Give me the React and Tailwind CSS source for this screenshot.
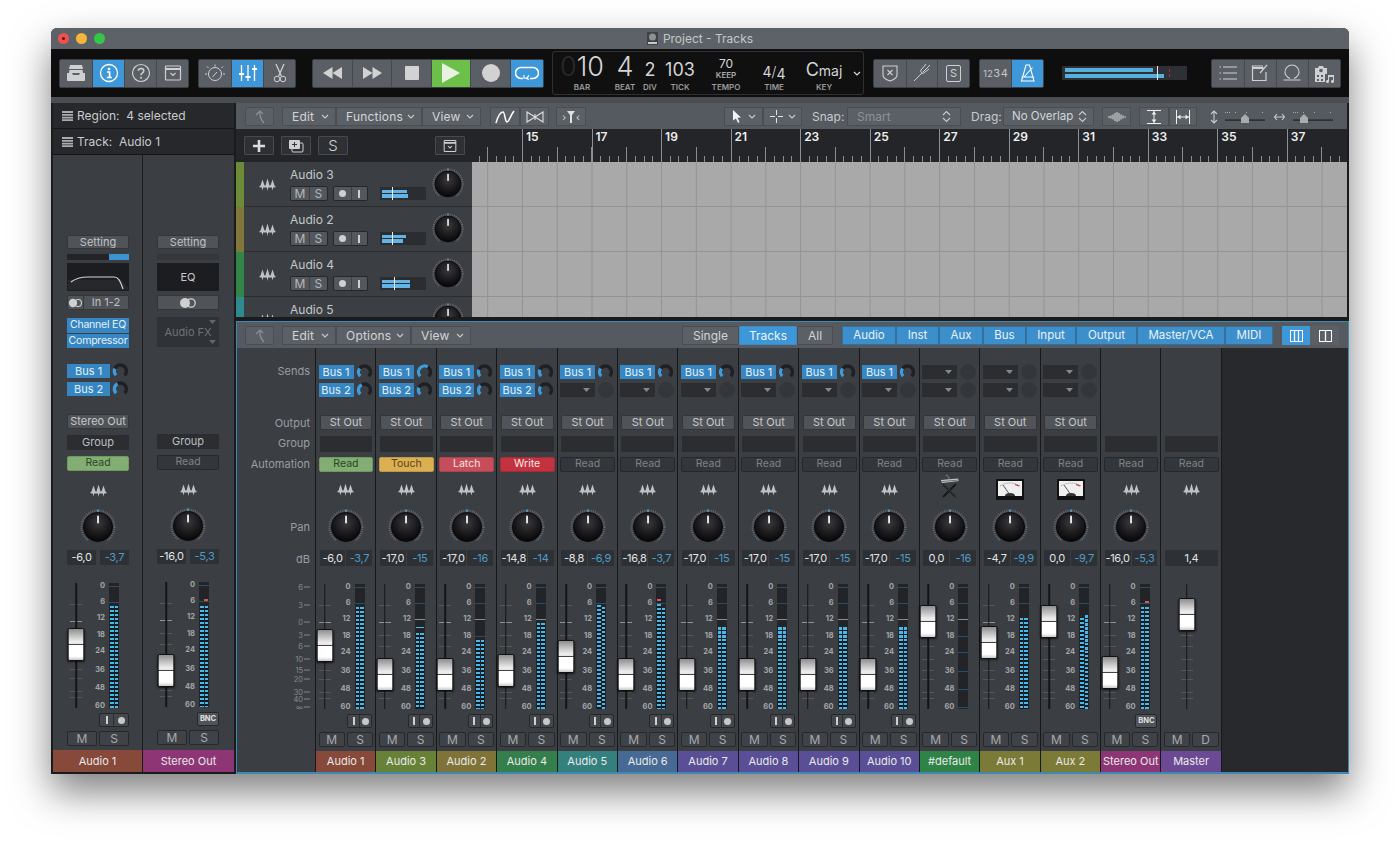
import React from 'react'

const SCALE = [
  ['0', 3], ['6', 19], ['12', 35], ['18', 52], ['24', 68], ['36', 87], ['48', 105], ['60', 123],
]
const DASHES = [21, 38, 51, 62, 75, 86, 95, 108, 114]
const GAIN = [
  ['6', 3], ['3', 21], ['0', 38], ['3', 51], ['6', 62], ['10', 75], ['15', 86], ['20', 95], ['30', 108], ['40', 115], ['∞', 123],
]

const STRIPS = [
  { name: 'Audio 1', color: 'bg-[#86493a]', sends: [0.3, 0.4], auto: 'Read', db: ['-6,0', '-3,7'], fader: 45, meter: [23, 23] },
  { name: 'Audio 3', color: 'bg-[#678237]', sends: [0.62, 0.25], auto: 'Touch', db: ['-17,0', '-15'], fader: 74, meter: [49, 49], peak: 43 },
  { name: 'Audio 2', color: 'bg-[#7f7338]', sends: [0.25, 0.35], auto: 'Latch', db: ['-17,0', '-16'], fader: 74, meter: [56, 56] },
  { name: 'Audio 4', color: 'bg-[#347f4b]', sends: [0.25, 0.3], auto: 'Write', db: ['-14,8', '-14'], fader: 70, meter: [39, 39] },
  { name: 'Audio 5', color: 'bg-[#33807f]', sends: [0.3, null], db: ['-8,8', '-6,9'], fader: 56, meter: [21, 23] },
  { name: 'Audio 6', color: 'bg-[#466a93]', sends: [0.3, null], db: ['-16,8', '-3,7'], fader: 74, meter: [20, 24], redLeft: true },
  { name: 'Audio 7', color: 'bg-[#5a4f96]', sends: [0.3, null], db: ['-17,0', '-15'], fader: 74, meter: [43, 43] },
  { name: 'Audio 8', color: 'bg-[#5a4f96]', sends: [0.3, null], db: ['-17,0', '-15'], fader: 74, meter: [43, 43] },
  { name: 'Audio 9', color: 'bg-[#5a4f96]', sends: [0.3, null], db: ['-17,0', '-15'], fader: 74, meter: [43, 43] },
  { name: 'Audio 10', color: 'bg-[#5a4f96]', sends: [0.3, null], db: ['-17,0', '-15'], fader: 74, meter: [43, 43] },
  { name: '#default', color: 'bg-[#2f8347]', sends: [null, null], db: ['0,0', '-16'], fader: 21, meter: [125, 125], icon: 'keys', noExt: true },
  { name: 'Aux 1', color: 'bg-[#7c7a37]', sends: [null, null], db: ['-4,7', '-9,9'], fader: 42, meter: [34, 34], icon: 'vu', noExt: true },
  { name: 'Aux 2', color: 'bg-[#7c7a37]', sends: [null, null], db: ['0,0', '-9,7'], fader: 21, meter: [34, 31], icon: 'vu', noExt: true },
  { name: 'Stereo Out', color: 'bg-[#8e3675]', sends: [], noOutput: true, db: ['-16,0', '-5,3'], fader: 72, meter: [23, 23], red: true, bnc: true },
  { name: 'Master', color: 'bg-[#6c4a93]', sends: [], noOutput: true, master: true, db: ['1,4'], fader: 14 },
]

const TRACKS = [
  { name: 'Audio 3', color: 'bg-[#6b8b39]', fill: [25, 26], line: 12 },
  { name: 'Audio 2', color: 'bg-[#82763a]', fill: [24, 21], line: 12 },
  { name: 'Audio 4', color: 'bg-[#33854a]', fill: [28, 28], line: 14 },
  { name: 'Audio 5', color: 'bg-[#2f8a8e]', fill: [25, 26], line: 12 },
]

// small drawings
function Chev({ c = '#c8cbce' }) {
  return (
    <svg width="8" height="5" viewBox="0 0 8 5"><path d="M1 1l3 3 3-3" stroke={c} fill="none" strokeWidth="1.1" /></svg>
  )
}

function Updown() {
  return (
    <svg width="9" height="13" viewBox="0 0 9 13" fill="none" stroke="#c8cbce" strokeWidth="1.1">
      <path d="M1 5l3.5-3.5L8 5M1 8l3.5 3.5L8 8" />
    </svg>
  )
}

function Wave() {
  return (
    <svg width="17" height="13" viewBox="0 0 17 13" fill="#c0c2c4">
      <path d="M0 9L1.500 7.500 3.500 1.500 5.500 7.500 6.500 7.500 8.500 .5 10.500 7.500 11.500 7.500 13.500 1.500 15.500 7.500 17 9 15 9.500 14.200 9.500 13.500 12.500 12.800 9.500 9.200 9.500 8.500 13 7.800 9.500 4.200 9.500 3.500 12.500 2.800 9.500 2 9.500z" />
    </svg>
  )
}

function Knob({ size = 36 }) {
  return (
    <svg width={size} height={size} viewBox="0 0 36 36">
      <defs>
        <radialGradient id="kn" cx="50%" cy="35%" r="65%">
          <stop offset="0%" stopColor="#3a3a3c" />
          <stop offset="60%" stopColor="#1a1a1c" />
          <stop offset="100%" stopColor="#060607" />
        </radialGradient>
      </defs>
      <circle cx="18" cy="18" r="16.5" fill="none" stroke="#6d7074" strokeWidth="2" pathLength="100" style={{ strokeDasharray: '0.9 1.2' }} />
      <path d="M9 31a16 16 0 0 0 18 0" stroke="#3b3f44" strokeWidth="4" fill="none" />
      <circle cx="18" cy="18" r="14.5" fill="url(#kn)" stroke="#0a0a0b" />
      <rect x="17.1" y="6.5" width="1.9" height="8" rx="0.8" fill="#e8e8e8" />
      <rect x="17.3" y="0.5" width="1.4" height="2.6" fill="#5aa6d6" />
    </svg>
  )
}

function polar(a, r) {
  const t = ((a - 90) * Math.PI) / 180
  return [8 + r * Math.cos(t), 8 + r * Math.sin(t)]
}

function arc(from, to, r) {
  const [x1, y1] = polar(from, r)
  const [x2, y2] = polar(to, r)
  return `M${x1} ${y1}A${r} ${r} 0 ${to - from > 180 ? 1 : 0} 1 ${x2} ${y2}`
}

function SendKnob({ value }) {
  const end = 225 + 270 * value
  return (
    <svg width="17" height="16" viewBox="0 0 16 16" fill="none" strokeWidth="3.4">
      <path d={arc(225, 495, 6)} stroke="#1e2023" />
      <path d={arc(225, end, 6)} stroke="#3e9bdc" />
    </svg>
  )
}

function EqCurve() {
  return (
    <svg width="60" height="26" viewBox="0 0 60 26" fill="none">
      <path d="M0 26V16h54l6 8v2z" fill="#26282b" />
      <path d="M3 18C8 14 12 13 20 13L46 13C50 13 52 16 55 25" stroke="#cfd1d3" strokeWidth="1.2" />
    </svg>
  )
}

function Link() {
  return (
    <svg width="18" height="12" viewBox="0 0 18 12">
      <circle cx="12" cy="6" r="4.2" fill="none" stroke="#d0d0d0" strokeWidth="1.3" />
      <circle cx="6" cy="6" r="5" fill="#cfcfcf" />
    </svg>
  )
}

function KeysIcon() {
  return (
    <svg width="20" height="25" viewBox="0 0 20 25" fill="none">
      <path d="M1 6l17-1.500 1 2.500-17 2z" fill="#c9cbcd" />
      <path d="M2 7.500l17-1.500" stroke="#55585c" strokeWidth="0.8" />
      <path d="M3 10l13 13M16 10L3 23" stroke="#17181a" strokeWidth="1.8" />
      <path d="M3.500 10l13 13" stroke="#6f7276" strokeWidth="0.5" />
      <path d="M9 5C9 3 8 2 6 1" stroke="#8a8d90" />
    </svg>
  )
}

function VuIcon() {
  return (
    <svg width="28" height="22" viewBox="0 0 28 22">
      <rect width="28" height="21" rx="1" fill="#111" />
      <rect x="2" y="2" width="24" height="15" fill="#efefef" />
      <path d="M4 7C10 3 18 3 24 7" stroke="#777" fill="none" strokeWidth="0.8" strokeDasharray="1 1" />
      <path d="M19 5.500l4 1.500" stroke="#c33" strokeWidth="1.2" />
      <path d="M7 6l7 10" stroke="#333" strokeWidth="0.8" />
      <path d="M9 17a5 3 0 0 1 10 0z" fill="#333" />
    </svg>
  )
}

function MiniSlider({ pos }) {
  return (
    <svg width="40" height="14" viewBox="0 0 40 14" fill="#a9acaf">
      <path d="M0 2h1v1H0zM2 2h1v1H2zM4 2h1v1H4zM10 2h1v1h-1zM21 2h1v1h-1zM37 2h1v1h-1z" />
      <rect y="9.5" width="40" height="1.2" fill="#1f2124" />
      <path d={`M${pos - 4} 13V8l4-4 4 4v5z`} />
    </svg>
  )
}

// top toolbar groups
function Group({ children, className = '' }) {
  return (
    <div className={`flex h-[29px] overflow-hidden rounded-[2px] border border-[#3c3f43] bg-[#5a5f65] ${className}`}>
      {children}
    </div>
  )
}

function Tb({ children, w = 'w-[32px]', on, first }) {
  return (
    <div className={`flex h-full ${w} items-center justify-center ${first ? '' : 'border-l border-[#45484d]'} ${on ? 'bg-[#3d97d8]' : ''}`}>
      {children}
    </div>
  )
}

function Transport() {
  return (
    <div className="flex h-[48px] items-center bg-[#0e0e0f] pl-[8px]">
      <Group>
        <Tb first>
          <svg width="20" height="20" viewBox="0 0 20 20" fill="#cfd0d2">
            <path d="M4 2h12l1 4H3z" />
            <path d="M3.500 7h13l.5 3H3z" />
            <path d="M1 10h5l1 2h6l1-2h5v7a1 1 0 0 1-1 1H2a1 1 0 0 1-1-1z" />
          </svg>
        </Tb>
        <Tb on>
          <svg width="20" height="20" viewBox="0 0 20 20" fill="none" stroke="#fff" strokeWidth="1.3">
            <circle cx="10" cy="10" r="8.5" />
            <circle cx="10" cy="6" r="1.3" fill="#fff" stroke="none" />
            <path d="M8 9h2.600v5.200M7.800 14.500h5" strokeWidth="1.7" />
          </svg>
        </Tb>
        <Tb>
          <svg width="20" height="20" viewBox="0 0 20 20" fill="none" stroke="#cfd0d2" strokeWidth="1.2">
            <circle cx="10" cy="10" r="8.5" />
            <path d="M7.300 7.800C7.300 4.600 12.800 4.600 12.800 7.800c0 2.200-2.800 2-2.800 4.400" strokeWidth="1.5" />
            <circle cx="10" cy="14.800" r="1" fill="#cfd0d2" stroke="none" />
          </svg>
        </Tb>
        <Tb>
          <svg width="18" height="18" viewBox="0 0 18 18" fill="none" stroke="#cfd0d2" strokeWidth="1.2">
            <rect x="1.5" y="2" width="15" height="14" rx="1" />
            <path d="M1.500 5h15" strokeWidth="2" />
            <path d="M6.500 9l2.500 2.500L11.500 9" />
          </svg>
        </Tb>
      </Group>
      <Group className="ml-[9px]">
        <Tb first>
          <svg width="22" height="22" viewBox="0 0 22 22" fill="none" stroke="#cfd0d2" strokeWidth="1">
            <circle cx="11" cy="12" r="6.5" />
            <path d="M8.500 15l4.500-5M11 2.500v2M3 4.500l1.500 1.500M19 4.500L17.500 6M1 12h2M19 12h2" />
          </svg>
        </Tb>
        <Tb on>
          <svg width="20" height="20" viewBox="0 0 20 20" stroke="#fff" strokeWidth="1.3" fill="none">
            <path d="M3.500 2v16M10 2v16M16.500 2v16" />
            <path d="M1 11h5M7.500 14h5M14 6h5" strokeWidth="2" />
          </svg>
        </Tb>
        <Tb>
          <svg width="14" height="20" viewBox="0 0 14 20" fill="none" stroke="#d0d0d0" strokeWidth="1">
            <path d="M3 1l5.300 12M11 1L5.700 13" strokeWidth="1.3" />
            <circle cx="4" cy="16" r="2.8" />
            <circle cx="10" cy="16" r="2.8" />
          </svg>
        </Tb>
      </Group>
      <Group className="ml-[16px]">
        <Tb first w="w-[39px]">
          <svg width="19" height="12" viewBox="0 0 19 12" fill="#d2d2d2"><path d="M9.500 0v12L0 6zM19 0v12L9.500 6z" /></svg>
        </Tb>
        <Tb w="w-[39px]">
          <svg width="19" height="12" viewBox="0 0 19 12" fill="#d2d2d2"><path d="M0 0v12l9.500-6zM9.500 0v12L19 6z" /></svg>
        </Tb>
        <Tb w="w-[40px]">
          <div className="h-[14px] w-[14px] rounded-[1px] bg-[#d2d2d2]" />
        </Tb>
        <Tb w="w-[39px]">
          <div className="flex h-full w-full items-center justify-center bg-[#6cc04a]">
            <svg width="18" height="20" viewBox="0 0 18 20" fill="#e8f2e0"><path d="M0 0l18 10L0 20z" /></svg>
          </div>
        </Tb>
        <Tb w="w-[40px]">
          <div className="h-[18px] w-[18px] rounded-full bg-[#d2d2d2]" />
        </Tb>
        <Tb on w="w-[33px]">
          <svg width="24" height="14" viewBox="0 0 24 14" fill="none" stroke="#fff" strokeWidth="1.5">
            <path d="M8 12.500H6a5 5 0 0 1 0-11h12a5 5 0 0 1 0 11h-3" />
            <path d="M14 9.500l-2.500 3 2.500 1M9 9v3l3 .5" strokeWidth="1.2" />
          </svg>
        </Tb>
      </Group>
      <Display />
      <Group className="ml-[9px]">
        <Tb first w="w-[31.67px]">
          <svg width="16" height="18" viewBox="0 0 16 18" fill="none" stroke="#cfd0d2" strokeWidth="1.1">
            <path d="M1 2h14v9c0 3-4 5-7 6-3-1-7-3-7-6z" />
            <path d="M5.500 6l5 5M10.500 6l-5 5" />
          </svg>
        </Tb>
        <Tb w="w-[31.67px]">
          <svg width="18" height="18" viewBox="0 0 18 18" fill="none" stroke="#d0d0d0" strokeWidth="1">
            <path d="M17 1l-7 7M13 0L8 6c-.8 1 .2 3 2 3.500L16 5M9 9L1 17" />
          </svg>
        </Tb>
        <Tb w="w-[31.67px]">
          <div className="flex h-[17px] w-[15px] items-center justify-center rounded-[2px] border border-[#cfd0d2] text-[11px] leading-none text-[#cfd0d2]">S</div>
        </Tb>
      </Group>
      <Group className="ml-[9px]">
        <Tb first w="w-[31.5px]">
          <span className="text-[11px] leading-none tracking-[0.5px] text-[#c8c8c8]"><span className="text-[9px]">12</span>34</span>
        </Tb>
        <Tb on w="w-[31.5px]">
          <svg width="16" height="18" viewBox="0 0 16 18" fill="none" stroke="#fff" strokeWidth="1.1">
            <path d="M6 1h3.500L14 17H1.500z" />
            <path d="M4 13L12.500 3.500M1.500 13H14" />
          </svg>
        </Tb>
      </Group>
      <div className="relative ml-[18px] flex h-[14px] w-[125px] flex-col justify-center gap-[2px] bg-[#2d3034] px-[3px]">
        <div className="h-[4px] w-[88px] bg-[#56b0de]" />
        <div className="h-[4px] w-[99px] bg-[#56b0de]" />
        <div className="absolute top-0 bottom-0 left-[95px] w-[1px] bg-[#e8e8e8]" />
        <div className="absolute top-[3px] left-[107px] h-[3px] w-[1px] bg-[#a8333a]" />
        <div className="absolute top-[8px] left-[107px] h-[3px] w-[1px] bg-[#a8333a]" />
      </div>
      <Group className="ml-[24px]">
        <Tb first>
          <svg width="18" height="14" viewBox="0 0 18 14" stroke="#cfd0d2" strokeWidth="1.1"><path d="M4 1h14M4 7h14M4 13h14M.5 1h1.500M.5 7h1.500M.5 13h1.500" /></svg>
        </Tb>
        <Tb>
          <svg width="18" height="18" viewBox="0 0 18 18" fill="none" stroke="#cfd0d2" strokeWidth="1.2">
            <path d="M12 2H1.500v14.500H15V8" />
            <path d="M1.500 4h11" strokeWidth="2" />
            <path d="M9 9l7-8" />
          </svg>
        </Tb>
        <Tb>
          <svg width="18" height="18" viewBox="0 0 18 18" fill="none" stroke="#cfd0d2" strokeWidth="1.1">
            <path d="M7 14.500C3.500 13 2 10.500 2 8a7 7 0 0 1 14 0c0 2.500-1.500 5-5 6.500M.5 16h17" />
          </svg>
        </Tb>
        <Tb>
          <svg width="21" height="19" viewBox="0 0 21 19" fill="#cfd0d2">
            <path d="M1 4h3l1-2h4l1 2h3v6H11v8H1z" />
            <circle cx="7" cy="6.500" r="1.800" fill="#5a5f65" />
            <path d="M14 11h6v6.500a1.500 1.500 0 1 1-1-1.400V13h-4v4.500a1.500 1.500 0 1 1-1-1.400z" />
            <path d="M3 11h2v2H3zM7 11h2v2H7zM3 15h2v2H3zM7 15h2v2H7z" fill="#5a5f65" />
          </svg>
        </Tb>
      </Group>
    </div>
  )
}

function Cell({ w, label, children }) {
  return (
    <div className={`flex ${w} h-full shrink-0 flex-col items-center justify-end`}>
      <div className="flex flex-1 flex-col items-center justify-end">{children}</div>
      <span className="mt-[2px] mb-[2px] whitespace-nowrap text-[8px] leading-[9px] font-semibold text-[#9a9a9a]">{label}</span>
    </div>
  )
}

function Display() {
  return (
    <div className="ml-[8px] flex h-[44px] w-[312px] items-center rounded-[3px] border border-[#2e3033] bg-[#101011] pl-[6px] font-light text-[#d4d4d4]">
      <Cell w="w-[46px]" label="BAR">
        <span className="whitespace-nowrap text-[27px] leading-[28px]"><span className="text-[#2a2a2b]">0</span>10</span>
      </Cell>
      <Cell w="w-[40px]" label="BEAT"><span className="text-[27px] leading-[28px]">4</span></Cell>
      <Cell w="w-[10px]" label="DIV"><span className="text-[18px] leading-[22px] font-normal">2</span></Cell>
      <Cell w="w-[50px]" label="TICK"><span className="text-[18px] leading-[22px] font-normal">103</span></Cell>
      <Cell w="w-[42px]" label="TEMPO">
        <span className="text-[12px] leading-[13px] font-normal">70</span>
        <span className="text-[8px] leading-[11px] font-semibold text-[#aaa]">KEEP</span>
      </Cell>
      <Cell w="w-[54px]" label="TIME">
        <span className="text-[14px] leading-[19px] font-normal">4<span className="font-light">/</span><span className="relative top-[2px]">4</span></span>
      </Cell>
      <Cell w="w-[46px]" label="KEY">
        <span className="whitespace-nowrap text-[18px] leading-[21px] font-normal">C<span className="text-[14px]">maj</span></span>
      </Cell>
      <div className="ml-[6px]"><Chev c="#ddd" /></div>
    </div>
  )
}

// lane toolbars
const barShape = 'flex h-[19px] items-center border border-[#4a4e53] text-[12px] leading-none'
const barBtn = `${barShape} justify-center bg-[#5b6066] text-[#d3d5d7]`
const headBtn = 'flex h-[19px] items-center justify-center rounded-[1px] border border-[#46494d] bg-[#2e3034] text-[12px] leading-none text-[#d3d5d7]'
const filterBtn = 'flex h-[19px] items-center justify-center border border-[#3270a0] bg-[#3d8fcb] text-[11.5px] leading-none text-[#e8f2f8]'

function BackBtn() {
  return (
    <div className={`${barBtn} w-[29px] rounded-[2px]`}>
      <svg width="10" height="14" viewBox="0 0 10 14" fill="none" stroke="#8d9094" strokeWidth="1.2"><path d="M1 5l4-4 3 3M5 1c-.5 4 0 8 4 12" /></svg>
    </div>
  )
}

function Menu({ label, w }) {
  return (
    <div className={`${barShape} ${w} justify-between bg-[#5b6066] pr-[6px] pl-[9px] tracking-[0.2px] text-[#d3d5d7]`}>
      <span>{label}</span>
      <Chev />
    </div>
  )
}

function TrackToolbar() {
  return (
    <div className="flex h-[26px] shrink-0 items-center bg-[#555a60] pt-[1px] pl-[9px]">
      <BackBtn />
      <div className="ml-[8px] flex">
        <Menu label="Edit" w="w-[54px]" />
        <Menu label="Functions" w="w-[86px]" />
        <Menu label="View" w="w-[59px]" />
      </div>
      <div className="ml-[9px] flex">
        <div className={`${barBtn} w-[30px]`}>
          <svg width="20" height="14" viewBox="0 0 20 14" fill="none" stroke="#fff" strokeWidth="1.5"><path d="M1 13C3 6 5 2 8 2c2 0 2 10 4 10 2 0 3-6 7-11" /></svg>
        </div>
        <div className={`${barBtn} w-[29px]`}>
          <svg width="18" height="12" viewBox="0 0 18 12" fill="none" stroke="#e0e0e0" strokeWidth="1.1"><path d="M1 1l16 10V1L1 11zM9 3v6" /></svg>
        </div>
      </div>
      <div className={`${barBtn} ml-[7px] w-[30px]`}>
        <span className="flex items-center gap-[1px] text-[10px]">›
          <svg width="8" height="12" viewBox="0 0 8 12" fill="#e0e0e0"><path d="M0 0h8L5 4v8H3V4z" /></svg>‹
        </span>
      </div>
      <div className="ml-[138px] flex">
        <div className={`${barBtn} w-[39px] gap-[6px]`}>
          <svg width="10" height="13" viewBox="0 0 10 13" fill="#f2f2f2"><path d="M1 0l8 7.500-3.500.3L7.500 12 6 13 4 8.500 1 10.500z" /></svg>
          <Chev />
        </div>
        <div className={`${barBtn} w-[39px] gap-[5px]`}>
          <svg width="13" height="13" viewBox="0 0 13 13" stroke="#e5e5e5"><path d="M0 6.500h5M8 6.500h5M6.500 0v5M6.500 8v5" /></svg>
          <Chev />
        </div>
      </div>
      <span className="ml-[10px] w-[32px] text-[12px] text-[#c8cbce]">Snap:</span>
      <div className={`${barShape} ml-[3px] w-[114px] justify-between bg-[#5b6066] px-[9px] text-[#8f9296]`}>
        <span>Smart</span>
        <Updown />
      </div>
      <span className="ml-[10px] w-[30px] text-[12px] text-[#c8cbce]">Drag:</span>
      <div className={`${barShape} ml-[2px] w-[91px] justify-between bg-[#5b6066] pr-[6px] pl-[8px] text-[#d3d5d7]`}>
        <span className="whitespace-nowrap text-[11.5px]">No Overlap</span>
        <Updown />
      </div>
      <div className={`${barBtn} ml-[8px] w-[29px]`}>
        <svg width="20" height="12" viewBox="0 0 20 12" stroke="#e0e0e0" strokeWidth="1"><path d="M1 6h2M4 4.500v3M6 3.500v5M8 2v8M10 1v10M12 2v8M14 3.500v5M16 4.500v3M17.500 6H19" /></svg>
      </div>
      <div className="ml-[8px] flex">
        <div className={`${barBtn} w-[30px]`}>
          <svg width="14" height="14" viewBox="0 0 14 14" stroke="#efefef" fill="#efefef"><path d="M0 .5h14M0 13.500h14M7 1v12" /><path d="M7 1.500l-2.500 3h5zM7 12.500l-2.500-3h5z" stroke="none" /></svg>
        </div>
        <div className={`${barBtn} w-[28px]`}>
          <svg width="14" height="14" viewBox="0 0 14 14" stroke="#efefef" fill="#efefef"><path d="M.5 0v14M13.500 0v14M1 7h12" /><path d="M1.500 7l3-2.500v5zM12.500 7l-3-2.500v5z" stroke="none" /></svg>
        </div>
      </div>
      <div className="ml-[13px]">
        <svg width="8" height="14" viewBox="0 0 8 14" fill="none" stroke="#c8cbce" strokeWidth="1.1"><path d="M1 4l3-3 3 3M1 10l3 3 3-3M4 1v12" /></svg>
      </div>
      <div className="ml-[7px]"><MiniSlider pos={20} /></div>
      <div className="ml-[9px]">
        <svg width="11" height="8" viewBox="0 0 11 8" fill="none" stroke="#c8cbce" strokeWidth="1.1"><path d="M3 1L.5 4 3 7M8 1l2.500 3L8 7M1 4h9" /></svg>
      </div>
      <div className="ml-[8px]"><MiniSlider pos={11} /></div>
    </div>
  )
}

function Ruler() {
  const bars = [15, 17, 19, 21, 23, 25, 27, 29, 31, 33, 35, 37]
  const beats = []
  for (let i = 0; i < 101; i++) {
    beats.push(15.2 - 8.69 + i * 8.69)
  }
  return (
    <div className="relative flex h-[33px] flex-1 overflow-hidden bg-[#232528] pl-[50px]">
      <svg className="absolute inset-0" width="876" height="33" stroke="#8b8d90">
        {beats.map((x, i) => {
          const mid = (i - 1) % 4 === 0
          return <path key={i} d={`M${Math.round(x) + 0.5} ${mid ? 18 : 27}V33`} />
        })}
      </svg>
      {bars.map((b) => (
        <div key={b} className="relative h-full w-[69.54px] shrink-0 border-l border-[#8f9194] pl-[3px] text-[12px] leading-[16px] font-semibold text-[#efefef]">
          {b}
        </div>
      ))}
    </div>
  )
}

function TrackRow({ t, clip }) {
  return (
    <div className={`flex ${clip ? 'h-[20px]' : 'h-[45px]'} overflow-hidden`}>
      <div className={`w-[8px] shrink-0 ${t.color}`} />
      <div className="flex h-[45px] w-[228px] shrink-0 items-center border-b border-[#2a2c2f] bg-[#3b3f44] pl-[15px]">
        <Wave />
        <div className="ml-[14px] flex h-full w-[136px] flex-col pt-[6px]">
          <span className="text-[12px] leading-[14px] text-[#c5c7c9]">{t.name}</span>
          {!clip && (
            <div className="mt-[4px] flex items-center">
              <div className="flex h-[15px] w-[38px] overflow-hidden rounded-[2px] border border-[#25272a] bg-[#54585d] text-[12px] leading-[13px] text-[#b4b7b9]">
                <span className="w-1/2 text-center">M</span>
                <span className="w-1/2 border-l border-[#3c3f43] text-center">S</span>
              </div>
              <div className="ml-[5px] flex h-[15px] w-[36px] items-center overflow-hidden rounded-[2px] border border-[#25272a] bg-[#54585d]">
                <div className="flex w-1/2 justify-center"><div className="h-[7px] w-[7px] rounded-full bg-[#d0d0d0]" /></div>
                <div className="flex h-full w-1/2 items-center justify-center border-l border-[#3c3f43]"><div className="h-[8px] w-[2px] bg-[#d0d0d0]" /></div>
              </div>
              <div className="relative ml-[12px] flex h-[13px] w-[46px] flex-col justify-center gap-[1px] bg-[#2b2d31] pl-[2px]">
                <div className="h-[3.5px] bg-[#62b4e6]" style={{ width: t.fill[0] }} />
                <div className="h-[3.5px] bg-[#62b4e6]" style={{ width: t.fill[1] }} />
                <div className="absolute top-0 bottom-0 w-[1px] bg-[#eee]" style={{ left: t.line }} />
              </div>
            </div>
          )}
        </div>
        <div className="ml-[6px]"><Knob size={32} /></div>
      </div>
    </div>
  )
}

function Arrange() {
  return (
    <div className="flex h-[214px] shrink-0 flex-col pr-[2px]">
      <TrackToolbar />
      <div className="flex h-[33px] shrink-0 bg-[#232528]">
        <div className="flex w-[236px] shrink-0 items-center pl-[8px]">
          <div className={`${headBtn} w-[30px]`}>
            <svg width="12" height="12" viewBox="0 0 12 12" fill="#dcdcdc"><path d="M4.700 0h2.600v4.700H12v2.600H7.300V12H4.700V7.300H0V4.700h4.700z" /></svg>
          </div>
          <div className={`${headBtn} ml-[7px] w-[30px]`}>
            <svg width="16" height="14" viewBox="0 0 16 14"><rect x="4" y="4" width="11" height="9" rx="1" fill="none" stroke="#d0d0d0" /><rect x="1" y="1" width="11" height="9" rx="1" fill="#d0d0d0" /><path d="M6.500 3v5M4 5.500h5" stroke="#333" /></svg>
          </div>
          <div className={`${headBtn} ml-[7px] w-[30px]`}><span className="text-[15px] font-light">S</span></div>
          <div className={`${headBtn} ml-[87px] w-[30px]`}>
            <svg width="14" height="14" viewBox="0 0 18 18" fill="none" stroke="#cfd0d2" strokeWidth="1.3"><rect x="1.5" y="2" width="15" height="14" rx="1" /><path d="M1.500 5h15" strokeWidth="2" /><path d="M6.500 9l2.500 2.500L11.500 9" /></svg>
          </div>
        </div>
        <Ruler />
      </div>
      <div className="flex min-h-0 flex-1 overflow-hidden">
        <div className="flex w-[236px] shrink-0 flex-col">
          {TRACKS.map((t, i) => <TrackRow key={t.name} t={t} clip={i === 3} />)}
        </div>
        <div className="flex-1 bg-[#a9a9a9] bg-[linear-gradient(90deg,#939393_1px,transparent_1px)] bg-[length:34.77px_100%] bg-[position:15.2px_0]">
          <div className="h-[45px] border-b border-[#939393]" />
          <div className="h-[45px] border-b border-[#939393]" />
          <div className="h-[45px] border-b border-[#939393]" />
        </div>
      </div>
    </div>
  )
}

function MixerToolbar() {
  const filters = [
    ['Audio', 'w-[54px]'], ['Inst', 'w-[43px]'], ['Aux', 'w-[44px]'], ['Bus', 'w-[43px]'],
    ['Input', 'w-[50px]'], ['Output', 'w-[61px]'], ['Master/VCA', 'w-[88px]'], ['MIDI', 'w-[48px]'],
  ]
  return (
    <div className="flex h-[26px] shrink-0 items-center bg-[#555a60] pt-[1px] pl-[8px]">
      <BackBtn />
      <div className="ml-[8px] flex">
        <Menu label="Edit" w="w-[54px]" />
        <Menu label="Options" w="w-[75px]" />
        <Menu label="View" w="w-[60px]" />
      </div>
      <div className="ml-[211px] flex">
        <div className={`${barBtn} w-[57px]`}>Single</div>
        <div className="flex h-[19px] w-[58px] items-center justify-center border border-[#3b8cc6] bg-[#3d97d8] text-[12px] leading-none text-[#eef6fb]">Tracks</div>
        <div className={`${barBtn} w-[36px]`}>All</div>
      </div>
      <div className="ml-[9px] flex">
        {filters.map(([f, w]) => (
          <div key={f} className={`${filterBtn} ${w}`}>{f}</div>
        ))}
      </div>
      <div className="ml-[9px] flex h-[19px] bg-[#5b6066]">
        <div className="flex w-[28px] items-center justify-center bg-[#3d97d8]">
          <svg width="13" height="12" viewBox="0 0 13 12" fill="none" stroke="#fff"><rect x=".5" y=".5" width="12" height="11" /><path d="M4.500 0v12M8.500 0v12" strokeWidth="1.3" /></svg>
        </div>
        <div className="ml-[1px] flex w-[28px] items-center justify-center">
          <svg width="13" height="12" viewBox="0 0 13 12" fill="none" stroke="#fff"><rect x=".5" y=".5" width="12" height="11" /><path d="M6.500 0v12" strokeWidth="1.3" /></svg>
        </div>
      </div>
    </div>
  )
}

// channel strip parts
function FaderMeter({ s, faderW, scaleW }) {
  return (
    <div className="flex h-[125px]">
      <div className={`relative h-full shrink-0 ${faderW}`}>
        {DASHES.map((y, i) => (
          <div key={y} className={`absolute left-1/2 h-[1px] w-[12px] -translate-x-1/2 ${i === 1 ? 'bg-[#8f9295]' : 'bg-[#55595d]'}`} style={{ top: y }} />
        ))}
        <div className="absolute top-0 bottom-0 left-1/2 w-[1.5px] -translate-x-1/2 bg-[#141517]" />
        <div
          className="absolute left-1/2 h-[33px] w-[17px] -translate-x-1/2 rounded-[2px] border border-[#111] bg-[linear-gradient(#8f8f8f,#efefef_42%,#e4e4e4_47%,#444_48%,#444_51%,#fff_52%,#fff_88%,#c8c8c8)] shadow-[0_1px_2px_rgba(0,0,0,0.7)]"
          style={{ top: s.fader }}
        />
      </div>
      {!s.master && (
        <>
          <div className={`relative h-full shrink-0 ${scaleW}`}>
            {SCALE.map(([l, y]) => (
              <span key={y} className="absolute right-0 -translate-y-1/2 text-[7.5px] leading-none font-bold text-[#a2a5a8]" style={{ top: y }}>{l}</span>
            ))}
          </div>
          <Meter s={s} />
        </>
      )}
    </div>
  )
}

function Meter({ s }) {
  const seg = 'bg-[repeating-linear-gradient(to_bottom,#4ab8e8_0,#4ab8e8_2.5px,#0e1a22_2.5px,#0e1a22_4px)]'
  const limit = Math.min(s.meter[0], s.meter[1])
  return (
    <div className="relative ml-[4px] flex h-full w-[10px] shrink-0 items-end justify-center gap-[1px] bg-[#222427]">
      {SCALE.map(([l, y]) => (
        y < limit && <div key={y} className={`absolute right-0 left-0 h-[1px] ${l === '12' ? 'bg-[#8a8d90]' : 'bg-[#274f6b]'}`} style={{ top: y }} />
      ))}
      {s.meter.map((top, i) => (
        <div key={i} className={`w-[3.5px] ${seg}`} style={{ height: Math.max(125 - top, 0) }} />
      ))}
      {s.red && <div className="absolute top-[17px] right-[1px] h-[2px] w-[4px] bg-[#d9594c]" />}
      {s.redLeft && <div className="absolute top-[15px] left-[1px] h-[1.5px] w-[4px] bg-[#d9594c]" />}
      {s.peak && <div className="absolute right-[1px] left-[1px] h-[1px] bg-[#4cb9ea]" style={{ top: s.peak }} />}
    </div>
  )
}

function ExtBtn({ bnc, cls = 'w-[25px]' }) {
  if (bnc) {
    return (
      <div className="flex h-[14px] w-[22px] items-center justify-center rounded-[2px] border border-[#25272a] bg-[#505459] text-[7.5px] leading-none font-bold text-[#e0e0e0]">BNC</div>
    )
  }
  return (
    <div className={`flex h-[14px] ${cls} items-center rounded-[2px] border border-[#25272a] bg-[#44484d]`}>
      <div className="flex h-full w-1/2 items-center justify-center border-r border-[#2a2c2f]"><div className="h-[8px] w-[2px] bg-[#d0d0d0]" /></div>
      <div className="flex w-1/2 justify-center"><div className="h-[7px] w-[7px] rounded-full bg-[#c8c8c8]" /></div>
    </div>
  )
}

function MS({ second = 'S', first = 'M' }) {
  const cls = 'flex h-[15px] flex-1 items-center justify-center rounded-[2px] border border-[#26282b] bg-[#3f4348] text-[12px] leading-none text-[#a7aaad]'
  return (
    <div className="mt-[4px] flex h-[15px] gap-[2px]">
      <div className={cls}>{first}</div>
      <div className={cls}>{second}</div>
    </div>
  )
}

function Auto({ label }) {
  const base = 'flex h-[15px] items-center justify-center rounded-[2px] border text-[10.5px] leading-none'
  if (label === 'Read') return <div className={`${base} border-[#6e9a60] bg-[#83ae73] text-[#2c4428]`}>Read</div>
  if (label === 'Touch') return <div className={`${base} border-[#bf9a46] bg-[#dcb052] text-[#55431d]`}>Touch</div>
  if (label === 'Latch') return <div className={`${base} border-[#ad434e] bg-[#c64e5a] text-[#f6e6e6]`}>Latch</div>
  if (label === 'Write') return <div className={`${base} border-[#a92a35] bg-[#c2323f] text-[#fbeaea]`}>Write</div>
  return <div className={`${base} border-[#26282b] bg-[#33363a] text-[#7f8387]`}>Read</div>
}

const darkOut = 'flex h-[15px] items-center justify-center rounded-[2px] border border-[#33363a] bg-[#505459] text-[11px] leading-none text-[#c9c9c9]'

function DbBox({ values }) {
  const box = 'flex h-[16px] flex-1 items-center justify-center bg-[#2d3034] text-[11px] leading-none tracking-[-0.3px]'
  return (
    <div className="flex gap-[1px]">
      <div className={`${box} text-[#e4e4e4]`}>{values[0]}</div>
      {values[1] && <div className={`${box} text-[#4e9dc9]`}>{values[1]}</div>}
    </div>
  )
}

function SendBus({ v, n }) {
  if (v === null) {
    return (
      <div className="flex h-[14px] items-center gap-[3px]">
        <div className="flex h-[14px] w-[35px] items-center justify-end bg-[#2b2d31] pr-[5px]">
          <svg width="7" height="4" viewBox="0 0 7 4" fill="#85888c"><path d="M0 0h7L3.500 4z" /></svg>
        </div>
        <div className="h-[16px] w-[16px] rounded-full border border-[#34373b] bg-[#33363a]" />
      </div>
    )
  }
  return (
    <div className="flex h-[14px] items-center gap-[2px]">
      <div className="flex h-[14px] w-[35px] items-center justify-center bg-[#3586c2] text-[11px] leading-none text-[#e4eff6]">Bus {n}</div>
      <SendKnob value={v} />
    </div>
  )
}

function Strip({ s }) {
  return (
    <div className="flex h-full w-[60.4px] shrink-0 flex-col border-l-[1.5px] border-[#17181a] bg-[#3b3f44]">
      <div className="flex-1 pt-[17px] pr-[2px] pl-[2.5px]">
        <div className="flex h-[33px] flex-col gap-[4px]">
          {s.sends.map((v, i) => <SendBus key={i} v={v} n={i + 1} />)}
        </div>
        <div className="mx-[1px] mt-[17px] h-[15px]">
          {!s.noOutput && <div className={darkOut}>St Out</div>}
        </div>
        <div className="mx-[1px] mt-[6px] h-[16px] bg-[#2b2d31]" />
        <div className="mt-[5px] h-[15px]"><Auto label={s.auto} /></div>
        <div className="mt-[10px] flex h-[15px] items-center justify-center">
          {s.icon === 'keys' ? <div className="-mt-[6px]"><KeysIcon /></div> : s.icon === 'vu' ? <VuIcon /> : <Wave />}
        </div>
        <div className="mt-[12px] flex h-[36px] justify-center">
          {!s.master && <Knob />}
        </div>
        <div className="mx-[1px] mt-[5px]"><DbBox values={s.db} /></div>
        <div className={`-ml-[2px] mt-[18px] ${s.master ? 'pl-[17px]' : ''}`}>
          <FaderMeter s={s} faderW="w-[16px]" scaleW="w-[18px]" />
        </div>
        <div className="mt-[5px] flex h-[14px] justify-end pr-[1px]">
          {!s.noExt && !s.master && <ExtBtn bnc={s.bnc} />}
        </div>
        <MS second={s.master ? 'D' : 'S'} />
      </div>
      <div className={`flex h-[21px] shrink-0 items-center justify-center text-[11px] whitespace-nowrap text-[#e9e9e9] ${s.color}`}>{s.name}</div>
    </div>
  )
}

function LabelColumn() {
  const lab = 'text-right text-[11px] leading-none text-[#9a9da0]'
  return (
    <div className="flex h-full w-[78px] shrink-0 flex-col bg-[#3b3f44] pr-[5px]">
      <div className={`${lab} mt-[18px] h-[33px]`}>Sends</div>
      <div className={`${lab} mt-[19px] h-[15px]`}>Output</div>
      <div className={`${lab} mt-[5px] h-[15px]`}>Group</div>
      <div className={`${lab} mt-[6px] h-[15px]`}>Automation</div>
      <div className={`${lab} mt-[48px] h-[15px]`}>Pan</div>
      <div className={`${lab} mt-[17px] h-[15px]`}>dB</div>
      <div className="relative mt-[15px] h-[125px]">
        {GAIN.map(([l, y]) => (
          <div key={y} className="absolute right-0 flex -translate-y-1/2 items-center gap-[1px] text-[7.5px] leading-[7px] text-[#84878a]" style={{ top: y }}>
            {l}<span className="h-[1px] w-[6px] bg-[#84878a]" />
          </div>
        ))}
      </div>
    </div>
  )
}

function Mixer() {
  return (
    <div className="flex min-h-0 flex-1 flex-col border border-b-2 border-[#3e88b4]">
      <MixerToolbar />
      <div className="flex min-h-0 flex-1 bg-[#27292c]">
        <LabelColumn />
        {STRIPS.map((s) => <Strip key={s.name} s={s} />)}
        <div className="flex-1 border-l-[1.5px] border-[#17181a]" />
      </div>
    </div>
  )
}

// inspector
function InspectorHead({ children }) {
  return (
    <div className="flex h-[26px] shrink-0 items-center gap-[4px] border-b border-[#141516] bg-[#26282b] pl-[9px] text-[12px] text-[#c9cbcd]">
      <svg width="11" height="10" viewBox="0 0 11 10" fill="#a9abae"><path d="M0 0h11v2H0zM0 3h11v1.800H0zM0 5.700h11v1.800H0zM0 8.300h11V10H0z" /></svg>
      {children}
    </div>
  )
}

function InspectorStrip({ s, first }) {
  const on = first
  return (
    <div className={`flex h-full shrink-0 flex-col bg-[#3b3f44] ${first ? 'w-[89px]' : 'ml-[1px] w-[91px]'}`}>
      <div className={`flex-1 pt-[80px] pl-[14px] ${first ? 'pr-[13px]' : 'pr-[15px]'}`}>
        <div className="flex h-[14px] items-center justify-center rounded-[2px] border border-[#33363a] bg-[#505459] text-[11px] leading-none text-[#c0c2c4]">Setting</div>
        <div className={`mt-[5px] flex h-[6px] justify-end ${on ? 'bg-[#222427]' : 'bg-[#34373b]'}`}>
          {on && <div className="h-full w-[20px] bg-[#3d93d0]" />}
        </div>
        <div className="mt-[3px] flex h-[28px] items-center justify-center bg-[#1c1d20] text-[11px] leading-none text-[#c8c8c8]">
          {on ? <EqCurve /> : 'EQ'}
        </div>
        {on ? (
          <div className="mt-[4px] flex h-[15px] overflow-hidden rounded-[2px] border border-[#33363a] bg-[#505459]">
            <div className="flex w-[16px] items-center justify-center border-r border-[#33363a]"><Link /></div>
            <div className="flex flex-1 items-center justify-center text-[11px] leading-none text-[#c0c2c4]">In 1-2</div>
          </div>
        ) : (
          <div className="mt-[4px] flex h-[15px] items-center justify-center rounded-[2px] border border-[#33363a] bg-[#505459]"><Link /></div>
        )}
        {on ? (
          <div className="mt-[8px] flex h-[30px] flex-col gap-[1px] text-[10.5px] leading-none tracking-[-0.2px] whitespace-nowrap text-[#e8f1f7]">
            <div className="flex flex-1 items-center justify-center bg-[#3586c2]">Channel EQ</div>
            <div className="flex flex-1 items-center justify-center bg-[#3586c2]">Compressor</div>
          </div>
        ) : (
          <div className="relative mt-[7px] mb-[1px] flex h-[30px] items-center justify-center bg-[#2f3236] text-[11px] leading-none text-[#6f7276]">
            Audio FX
            <svg className="absolute top-[3px] right-[3px]" width="7" height="4" viewBox="0 0 7 4" fill="#63666a"><path d="M0 0h7L3.500 4z" /></svg>
            <svg className="absolute right-[3px] bottom-[3px]" width="7" height="4" viewBox="0 0 7 4" fill="#63666a"><path d="M0 0h7L3.500 4z" /></svg>
          </div>
        )}
        <div className="mt-[16px] flex h-[32px] flex-col gap-[4px]">
          {on && [0.25, 0.4].map((v, i) => (
            <div key={i} className="flex h-[14px] items-center gap-[2px]">
              <div className="flex h-[14px] w-[44px] items-center justify-center bg-[#3586c2] text-[11px] leading-none text-[#e4eff6]">Bus {i + 1}</div>
              <SendKnob value={v} />
            </div>
          ))}
        </div>
        <div className="mt-[18px] h-[15px]">{on && <div className={darkOut}>Stereo Out</div>}</div>
        <div className="mt-[6px] flex h-[15px] items-center justify-center bg-[#2b2d31] text-[11px] leading-none text-[#bcbec0]">Group</div>
        <div className="mt-[6px] h-[15px]"><Auto label={s.auto} /></div>
        <div className="mt-[13px] flex h-[13px] items-center justify-center"><Wave /></div>
        <div className="mt-[12px] flex h-[36px] justify-center"><Knob /></div>
        <div className="mt-[5px] flex gap-[4px]">
          <div className="flex h-[15px] flex-1 items-center justify-center bg-[#2d3034] text-[11px] leading-none tracking-[-0.3px] text-[#e4e4e4]">{s.db[0]}</div>
          <div className="flex h-[15px] flex-1 items-center justify-center bg-[#2d3034] text-[11px] leading-none tracking-[-0.3px] text-[#4e9dc9]">{s.db[1]}</div>
        </div>
        <div className="-ml-[14px] mt-[18px]">
          <FaderMeter s={s} faderW="w-[46px]" scaleW="w-[6px]" />
        </div>
        <div className="mt-[5px] flex h-[14px] justify-end">
          <ExtBtn bnc={s.bnc} cls="w-[30px]" />
        </div>
        <MS />
      </div>
      <div className={`flex h-[22px] shrink-0 items-center justify-center text-[11px] whitespace-nowrap text-[#e9e9e9] ${s.color}`}>{s.name}</div>
    </div>
  )
}

function Inspector() {
  const a = { ...STRIPS[0], meter: [23, 23], fader: 45 }
  const b = { ...STRIPS[13], auto: undefined, fader: 72, meter: [24, 24] }
  return (
    <div className="ml-[2px] flex w-[181px] shrink-0 flex-col pb-[2px]">
      <InspectorHead>Region:&nbsp;&nbsp;4 selected</InspectorHead>
      <InspectorHead>Track:&nbsp;&nbsp;Audio 1</InspectorHead>
      <div className="flex min-h-0 flex-1">
        <InspectorStrip s={{ ...a, auto: 'Read' }} first />
        <InspectorStrip s={b} />
      </div>
    </div>
  )
}

export default function App() {
  return (
    <div className="h-[847px] w-[1400px] overflow-hidden bg-white pt-[28px] pl-[51px] font-['Inter',sans-serif]">
      <div className="flex h-[746px] w-[1298px] flex-col overflow-hidden rounded-t-[6px] bg-[#1a1b1d] shadow-[0_18px_38px_rgba(0,0,0,0.5)]">
        <div className="relative flex h-[21px] shrink-0 items-center justify-center gap-[5px] bg-[#5c6268]">
          <div className="absolute top-[5px] left-[7px] flex gap-[7px]">
            <div className="flex h-[11px] w-[11px] items-center justify-center rounded-full bg-[#f0514d]"><div className="h-[3px] w-[3px] rounded-full bg-[#5c1412]" /></div>
            <div className="h-[11px] w-[11px] rounded-full bg-[#f6b53b]" />
            <div className="h-[11px] w-[11px] rounded-full bg-[#33c649]" />
          </div>
          <svg width="11" height="13" viewBox="0 0 11 13"><rect width="11" height="13" fill="#3e4145" /><circle cx="5.5" cy="5" r="3.5" fill="#8d9094" /><rect x="1" y="10" width="9" height="2" fill="#c8c8c8" /></svg>
          <span className="text-[12px] leading-none text-[#c4c7ca]">Project - Tracks</span>
        </div>
        <Transport />
        <div className="h-[6px] shrink-0 bg-[#4a4e53]" />
        <div className="flex min-h-0 flex-1">
          <Inspector />
          <div className="ml-[2px] flex w-[1113px] shrink-0 flex-col">
            <Arrange />
            <div className="h-[4px] shrink-0 bg-[#1a1b1d]" />
            <Mixer />
          </div>
        </div>
      </div>
    </div>
  )
}
